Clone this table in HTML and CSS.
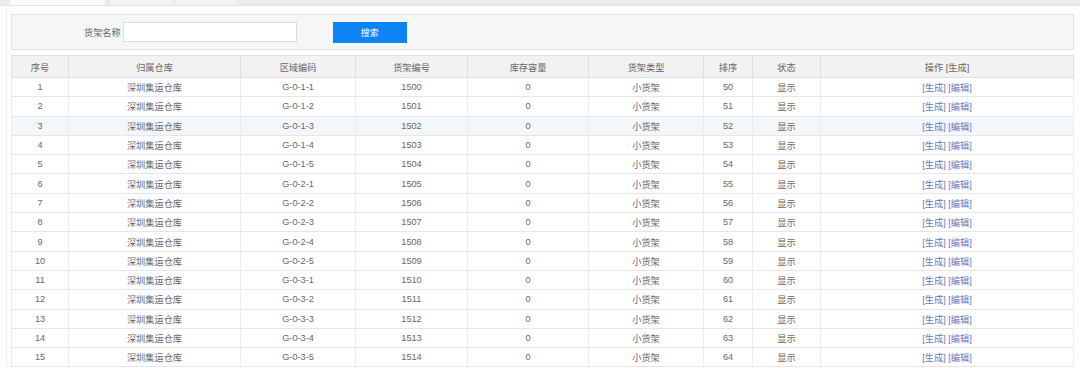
FILE: index.html
```html
<!DOCTYPE html>
<html lang="zh-CN">
<head>
  <meta charset="UTF-8" />
  <title>货架管理</title>
  <link rel="stylesheet" href="styles.css">
</head>
<body>
  <div class="tab-strip">
    <div class="tab tab-active"></div>
    <div class="tab"></div>
    <div class="tab"></div>
  </div>

  <div class="page">
    <form class="search-bar">
      <label class="search-label" for="shelfName">货架名称</label>
      <input class="search-input" id="shelfName" type="text" />
      <button class="btn-search" type="button">搜索</button>
    </form>

    <table class="data-table">
      <colgroup>
        <col style="width:57px"><col style="width:172px"><col style="width:115px">
        <col style="width:112px"><col style="width:121px"><col style="width:115px">
        <col style="width:49px"><col style="width:68px"><col>
      </colgroup>
      <thead>
        <tr>
          <th>序号</th>
          <th>归属仓库</th>
          <th>区域编码</th>
          <th>货架编号</th>
          <th>库存容量</th>
          <th>货架类型</th>
          <th>排序</th>
          <th>状态</th>
          <th>操作 [生成]</th>
        </tr>
      </thead>
      <tbody id="rows"></tbody>
    </table>
  </div>

  <script>
    const codes = ["G-0-1-1","G-0-1-2","G-0-1-3","G-0-1-4","G-0-1-5",
                   "G-0-2-1","G-0-2-2","G-0-2-3","G-0-2-4","G-0-2-5",
                   "G-0-3-1","G-0-3-2","G-0-3-3","G-0-3-4","G-0-3-5"];
    const tbody = document.getElementById("rows");

    codes.forEach((code, i) => {
      const tr = document.createElement("tr");
      if (i === 2) tr.className = "hover";
      tr.innerHTML =
        "<td>" + (i + 1) + "</td>" +
        "<td>深圳集运仓库</td>" +
        "<td>" + code + "</td>" +
        "<td>" + (1500 + i) + "</td>" +
        "<td>0</td>" +
        "<td>小货架</td>" +
        "<td>" + (50 + i) + "</td>" +
        "<td>显示</td>" +
        '<td><a class="op-link" href="#">[生成]</a> <a class="op-link" href="#">[编辑]</a></td>';
      tbody.appendChild(tr);
    });
  </script>
</body>
</html>
```

FILE: styles.css
```css
* {
  margin: 0;
  padding: 0;
  box-sizing: border-box;
}

body {
  font-family: "Liberation Sans", "Noto Sans CJK SC", sans-serif;
  font-size: 9.2px;
  color: #666;
  background: #fff;
  overflow: hidden;
}

.tab-strip {
  display: flex;
  gap: 6px;
  height: 6px;
  padding-left: 10px;
  background: #ececec;
  border-bottom: 1px solid #e2e2e2;
}

.tab {
  width: 60px;
  background: #f4f4f4;
}

.tab-active {
  width: 95px;
  background: #fafafa;
}

.page {
  margin-left: 6px;
  padding: 7px 6px 0 4px;
  border-left: 1px solid #eee;
}

.search-bar {
  display: flex;
  align-items: center;
  height: 36px;
  margin-top: 1px;
  background: #f5f7f7;
  border: 1px solid #e2e2e2;
  padding-left: 72px;
}

.search-label {
  color: #666;
  margin-right: 2px;
}

.search-input {
  width: 174px;
  height: 20px;
  border: 1px solid #ddd;
  background: #fff;
  outline: none;
}

.btn-search {
  width: 74px;
  height: 21px;
  margin-left: 36px;
  border: none;
  background: #0d84f5;
  color: #fff;
  font-family: inherit;
  font-size: 9px;
}

.data-table {
  width: 100%;
  margin-top: 5px;
  border-collapse: collapse;
  table-layout: fixed;
  border: 1px solid #e2e2e2;
}

.data-table th {
  height: 22px;
  background: #f2f2f2;
  font-weight: normal;
  color: #666;
  border: 1px solid #e0e0e0;
}

.data-table td {
  height: 19.3px;
  text-align: center;
  border: 1px solid #e6e6e6;
  border-left-color: #ededed;
  border-right-color: #ededed;
}

.data-table tr.hover td {
  background: #f3f7f9;
}

.op-link {
  color: #5b7cc4;
  text-decoration: none;
}
```
